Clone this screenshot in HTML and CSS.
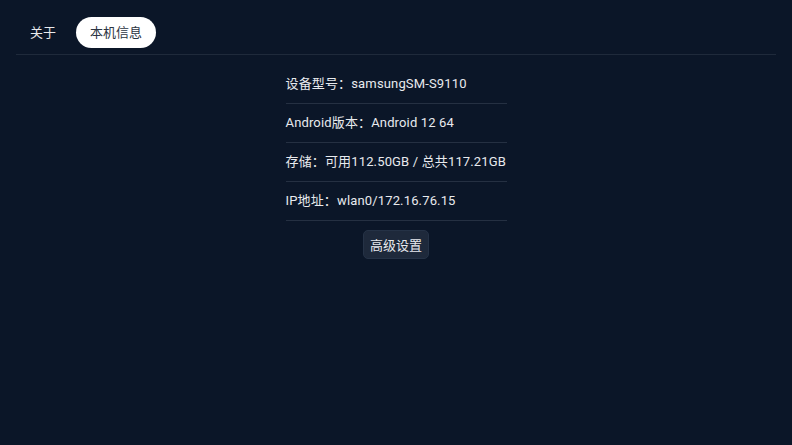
FILE: index.html
```html
<!DOCTYPE html>
<html lang="zh-CN">
<head>
  <meta charset="UTF-8">
  <meta name="viewport" content="width=device-width, initial-scale=1.0">
  <title>本机信息</title>
  <link rel="stylesheet" href="styles.css">
</head>
<body>

  <div class="page">
    <div class="tabs">
      <div class="tab">关于</div>
      <div class="tab active">本机信息</div>
    </div>

    <div class="info">
      <div class="row">设备型号：samsungSM-S9110</div>
      <div class="row">Android版本：Android 12 64</div>
      <div class="row">存储：可用112.50GB / 总共117.21GB</div>
      <div class="row">IP地址：wlan0/172.16.76.15</div>
      <button class="btn">高级设置</button>
    </div>
  </div>

</body>
</html>
```

FILE: styles.css
```css
body {
  margin: 0;
  background: #0b1628;
  color: #e8eaee;
  font-family: Roboto, "Noto Sans CJK SC", sans-serif;
  font-size: 13px;
  height: 100vh;
  overflow: hidden;
}

.page {
  padding: 17px 16px 0;
}

.tabs {
  display: flex;
  align-items: center;
  gap: 6px;
  padding-bottom: 6px;
  border-bottom: 1px solid #1f2a3b;
}

.tab {
  height: 31px;
  line-height: 31px;
  padding: 0 14px;
  border-radius: 16px;
  color: #e8eaee;
}

.tab.active {
  background: #fff;
  color: #2b3442;
}

.info {
  width: 221px;
  margin: 10px auto 0;
  display: flex;
  flex-direction: column;
  align-items: center;
}

.row {
  align-self: stretch;
  height: 38px;
  line-height: 38px;
  border-bottom: 1px solid #253042;
  white-space: nowrap;
  letter-spacing: 0.15px;
}

.btn {
  margin-top: 9px;
  height: 29px;
  padding: 0 6px;
  background: #1e293b;
  color: #e8eaee;
  border: 1px solid #253246;
  border-radius: 5px;
  font-family: inherit;
  font-size: 13px;
  cursor: pointer;
}
```
